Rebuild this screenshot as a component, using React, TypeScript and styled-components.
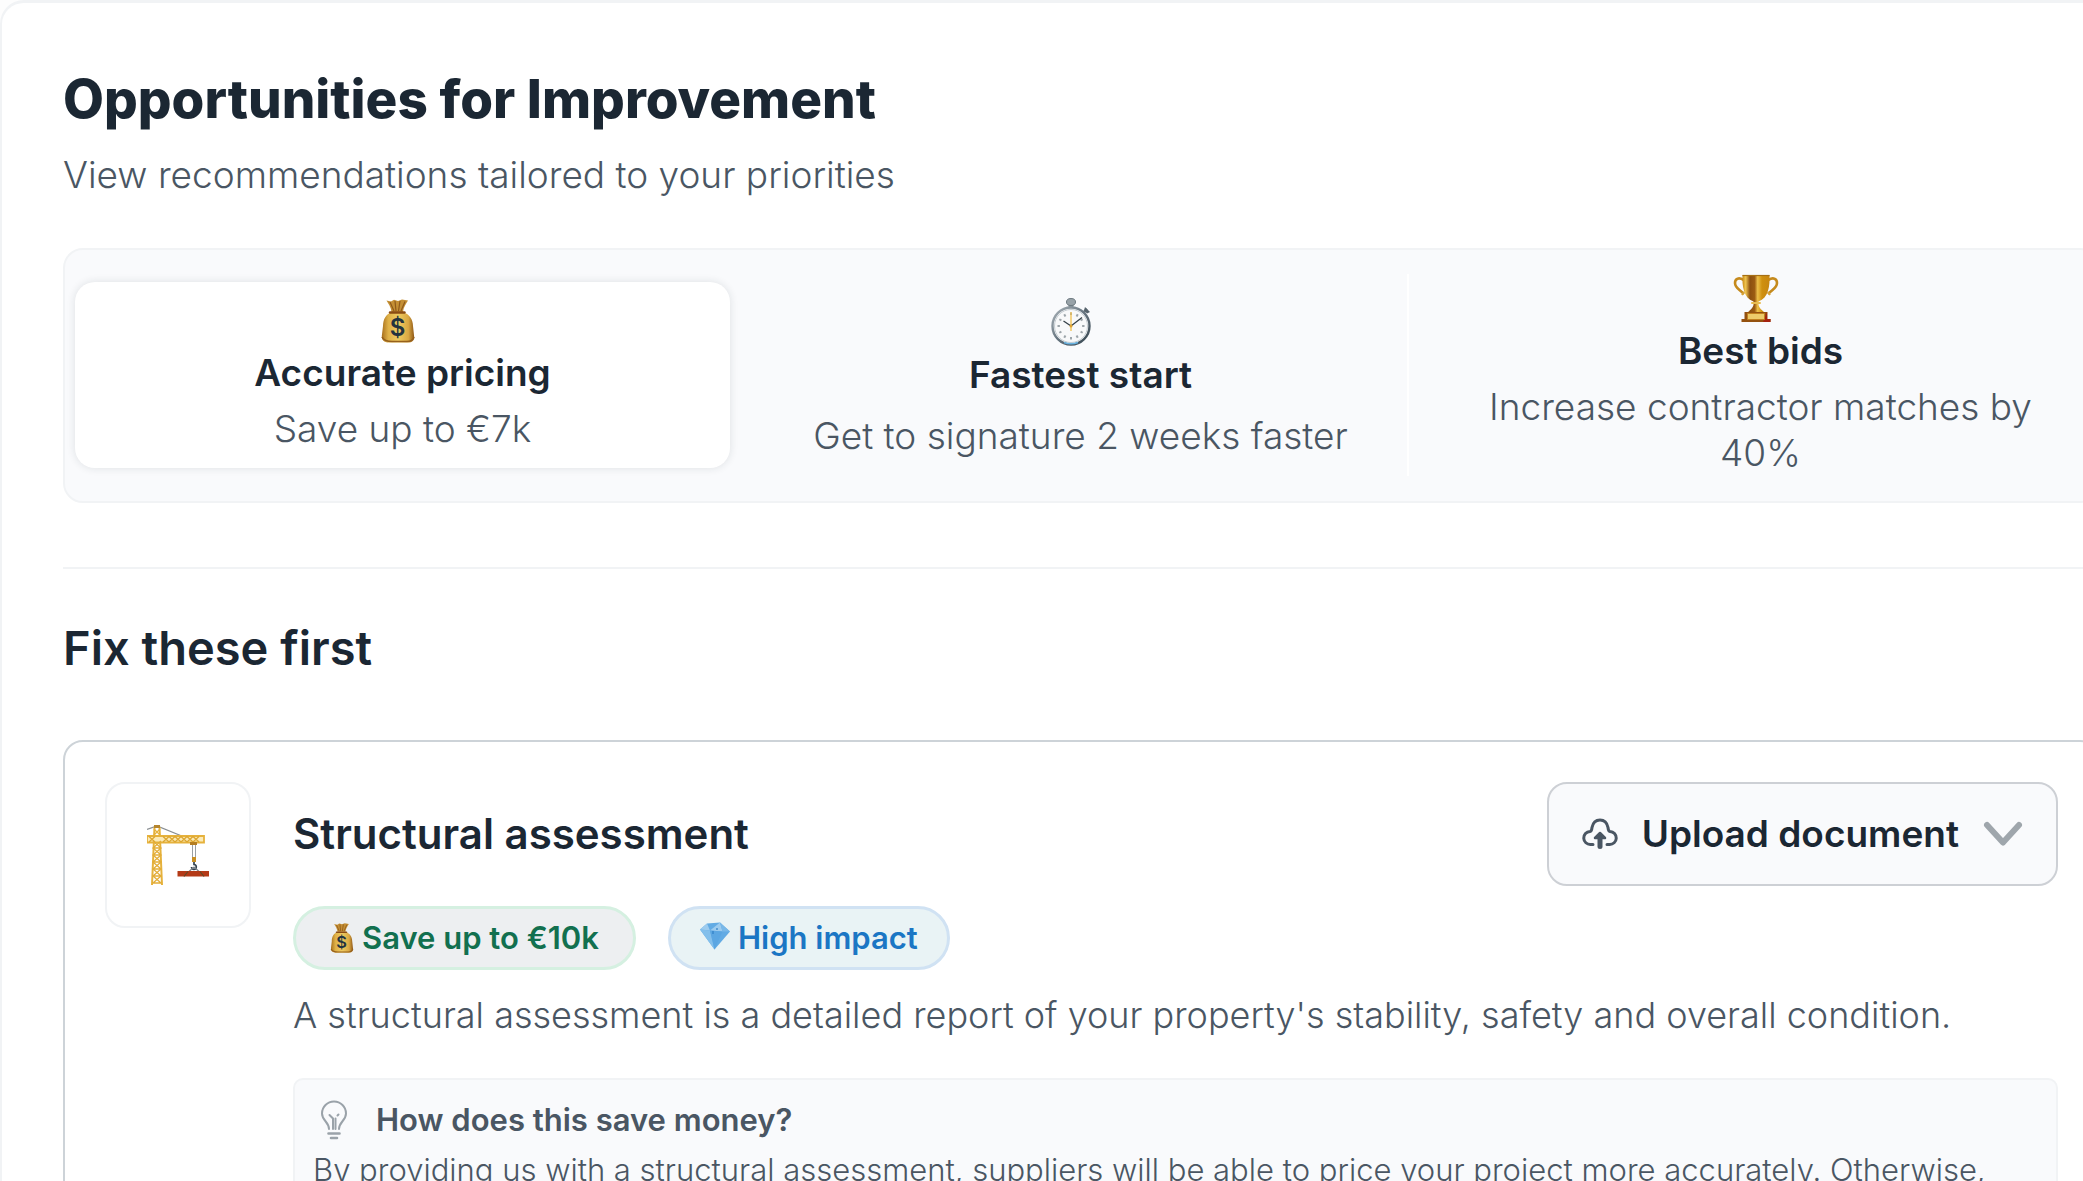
import React from "react";
import styled, { createGlobalStyle } from "styled-components";

const ink = "#1b2733";
const slate = "#4a5663";
const line = "#f1f3f5";
const wash = "#f9fafc";

const GlobalStyle = createGlobalStyle`
  *, *::before, *::after { box-sizing: border-box; }
  html, body, #root { height: 100%; }
  body {
    margin: 0;
    overflow: hidden;
    background: #fdfdfd;
    color: ${ink};
    font-family: Inter, "Liberation Sans", sans-serif;
  }
  h1, h2, h3, h4, p { margin: 0; }
  button { font: inherit; color: inherit; cursor: pointer; }
`;

const Sheet = styled.main`
  height: 100%;
  overflow: hidden;
  padding: 62px 64px 0 61px;
  background: #fff;
  border: solid ${line};
  border-width: 3px 0 0 2px;
  border-radius: 24px 0 0 0;
`;

const Content = styled.div`
  margin-right: -81px;
`;

const Title = styled.h1`
  font-size: 53px;
  line-height: 68px;
  font-weight: 800;
`;

const Subtitle = styled.p`
  margin-top: 19px;
  font-size: 37px;
  line-height: 46px;
  font-weight: 300;
  color: ${slate};
`;

const TabBar = styled.div`
  display: grid;
  grid-template-columns: repeat(3, 1fr);
  align-items: center;
  gap: 24px;
  margin-top: 50px;
  padding: 24px 10px 25px;
  background: ${wash};
  border: 2px solid ${line};
  border-radius: 20px;
`;

const Tab = styled.button<{ $active?: boolean; $ruled?: boolean }>`
  display: flex;
  flex-direction: column;
  align-items: center;
  align-self: ${(p) => (p.$ruled ? "stretch" : "center")};
  justify-content: center;
  gap: ${(p) => (p.$ruled ? 15 : 10)}px;
  padding: ${(p) => (p.$active ? "16px 24px" : p.$ruled ? "6px 48px 0" : "0 48px")};
  border: 0;
  border-right: ${(p) => (p.$ruled ? "2px solid #fff" : "0")};
  border-radius: ${(p) => (p.$active ? "20px" : "0")};
  background: ${(p) => (p.$active ? "#fff" : "none")};
  box-shadow: ${(p) => (p.$active ? "0 0 8px rgba(27, 39, 51, 0.12)" : "none")};
  text-align: center;
`;

const TabHead = styled.span`
  display: flex;
  flex-direction: column;
  align-items: center;
  gap: 6px;

  svg { margin-right: 8px; }
`;

const TabTitle = styled.span`
  font-size: 37px;
  line-height: 46px;
  font-weight: 600;
`;

const TabNote = styled.span`
  font-size: 37px;
  line-height: 46px;
  font-weight: 300;
  color: ${slate};
`;

const Rule = styled.hr`
  height: 2px;
  margin: 64px 0 0;
  border: 0;
  background: ${line};
`;

const SectionTitle = styled.h2`
  margin-top: 51px;
  font-size: 47px;
  line-height: 56px;
  font-weight: 600;
`;

const Card = styled.article`
  display: flex;
  gap: 42px;
  margin-top: 64px;
  padding: 40px;
  border: 2px solid #cdd3d8;
  border-radius: 20px;
`;

const IconTile = styled.div`
  display: flex;
  flex: none;
  align-items: center;
  justify-content: center;
  width: 146px;
  height: 146px;
  border: 2px solid ${line};
  border-radius: 20px;
`;

const CardBody = styled.div`
  flex: 1;
  min-width: 0;
`;

const CardHeader = styled.div`
  display: flex;
  align-items: center;
  justify-content: space-between;
`;

const CardTitle = styled.h3`
  font-size: 42px;
  line-height: 52px;
  font-weight: 600;
`;

const UploadButton = styled.button`
  display: flex;
  align-items: center;
  gap: 24px;
  height: 104px;
  padding: 0 33px;
  background: ${wash};
  border: 2px solid #cdd0d5;
  border-radius: 20px;
  font-size: 37px;
  line-height: 46px;
  font-weight: 600;
`;

const Badges = styled.div`
  display: flex;
  gap: 32px;
  margin-top: 20px;
`;

const Badge = styled.span<{ $tone: "green" | "blue" }>`
  display: flex;
  align-items: center;
  gap: 8px;
  height: 64px;
  padding: 0 ${(p) => (p.$tone === "green" ? 34 : 29)}px;
  border: 3px solid ${(p) => (p.$tone === "green" ? "#d5f0e1" : "#d0e2f3")};
  border-radius: 32px;
  background: ${(p) => (p.$tone === "green" ? "#edeff1" : "#e9f3f5")};
  color: ${(p) => (p.$tone === "green" ? "#12704f" : "#1b76c4")};
  font-size: 31px;
  line-height: 40px;
  font-weight: 600;
`;

const Description = styled.p`
  margin-top: 22px;
  font-size: 36px;
  line-height: 46px;
  font-weight: 300;
  white-space: nowrap;
  color: ${slate};
`;

const Note = styled.section`
  margin-top: 40px;
  padding: 20px 18px 24px;
  background: ${wash};
  border: 2px solid ${line};
  border-radius: 10px;
  color: ${slate};
`;

const NoteHeader = styled.div`
  display: flex;
  align-items: center;
  gap: 28px;
  padding-left: 7px;
`;

const NoteTitle = styled.h4`
  font-size: 31px;
  line-height: 40px;
  font-weight: 600;
`;

const NoteText = styled.p`
  margin-top: 10px;
  font-size: 31px;
  line-height: 40px;
  font-weight: 300;
  white-space: nowrap;
`;

function MoneyBag({ id, width, height }: { id: string; width: number; height: number }) {
  return (
    <svg width={width} height={height} viewBox="0 0 34 44" aria-hidden="true">
      <defs>
        <linearGradient id={id} x1="0" x2="1" y1="0" y2="0">
          <stop offset="0" stopColor="#a8701d" />
          <stop offset="0.2" stopColor="#deb047" />
          <stop offset="0.5" stopColor="#efcb61" />
          <stop offset="0.82" stopColor="#d9a843" />
          <stop offset="1" stopColor="#8f5715" />
        </linearGradient>
      </defs>
      <path d="M10.500 13C10 8 7 4 5.500 1.500L10 2.500 13 .8 17 2 21 .5 27 1.500C25 5 22.500 8 22 13Z" fill="#c48f34" />
      <path d="M9 3 13 12M14 2 15 12M19 2 17.500 12M24 2.500 20 12" stroke="#8f5a1b" strokeWidth="1.200" fill="none" />
      <path d="M11 13C5 15 2 20 2 27L.8 37C.5 41 3 43.500 8 43.500H27C31 43.500 33.500 41.500 33.200 38L32 27C32 20 28 15 22 13Z" fill={`url(#${id})`} />
      <path d="M1 38C3 42 7 42.500 11 42.500H26C30 42.500 32 41 33 38" stroke="#96601c" strokeWidth="1.600" fill="none" />
      <path d="M9 13.500H23.500" stroke="#8a4c13" strokeWidth="2.400" strokeLinecap="round" />
      <text x="16.500" y="37" textAnchor="middle" fontFamily="Inter, sans-serif" fontSize="24" fontWeight="600" fill="#23333f">$</text>
    </svg>
  );
}

function Stopwatch() {
  const marks = Array.from({ length: 12 }, (_, i) => i * 30);
  return (
    <svg width="50" height="48" viewBox="0 0 50 48" aria-hidden="true">
      <defs>
        <linearGradient id="rim" x1="0" x2="1" y1="0" y2="1">
          <stop offset="0" stopColor="#a9b2b8" />
          <stop offset="0.5" stopColor="#66747f" />
          <stop offset="1" stopColor="#35454f" />
        </linearGradient>
      </defs>
      <path d="M17.500 5h5v5h-5z" fill="#7d8a92" />
      <ellipse cx="20" cy="4" rx="4.500" ry="3.500" fill="#98a2a8" stroke="#6d7980" />
      <path d="m32 15 4-4" stroke="#6d7980" strokeWidth="2.500" />
      <path d="m34 9 5 5-3 1.500-3-3z" fill="#56636c" />
      <circle cx="20" cy="28" r="18.500" fill="#f8f9fa" stroke="url(#rim)" strokeWidth="2.400" />
      <circle cx="20" cy="28" r="16.500" fill="none" stroke="#c5cdd2" strokeWidth="1" />
      <path d="M13 44.500Q20 47 27 44.500" stroke="#68b3e2" strokeWidth="1.400" fill="none" />
      {marks.map((a) => (
        <path key={a} d="M20 14.500v2.400" stroke="#9da5aa" strokeWidth="2" transform={`rotate(${a} 20 28)`} />
      ))}
      <path d="M20 14v19" stroke="#f1c04e" strokeWidth="1.300" />
      <path d="M12.500 23 20 28 31 19.500" stroke="#333f47" strokeWidth="1.300" fill="none" />
      <circle cx="20" cy="28" r="1.500" fill="#e0a42f" />
    </svg>
  );
}

function Trophy() {
  return (
    <svg width="46" height="48" viewBox="0 0 46 48" aria-hidden="true">
      <defs>
        <linearGradient id="cup" x1="0" x2="1" y1="0" y2="0">
          <stop offset="0" stopColor="#c98a17" />
          <stop offset="0.12" stopColor="#efc44f" />
          <stop offset="0.28" stopColor="#8c4f10" />
          <stop offset="0.45" stopColor="#9c5c12" />
          <stop offset="0.56" stopColor="#edbf49" />
          <stop offset="0.72" stopColor="#cf900f" />
          <stop offset="1" stopColor="#c78610" />
        </linearGradient>
      </defs>
      <path d="M10.500 6C6 3 2 4.500 2 9C2 14 6 15 11 20M35.500 6C40 3 44 4.500 44 9C44 14 40 15 35 20" stroke="#c58a1d" strokeWidth="2.600" fill="none" />
      <path d="M11 18 9 21M35 18 37 21" stroke="#d7a336" strokeWidth="2" />
      <path d="M9.500 1H36.500C37 12 35.500 24 25.500 27.500V31C26 34 29 36 31 38H15C17 36 20 34 20.500 31V27.500C10.500 24 9 12 9.500 1Z" fill="url(#cup)" />
      <path d="M9.500 1.500H36.500" stroke="#a66f14" strokeWidth="1.200" />
      <path d="M19 29H27" stroke="#e8bd52" strokeWidth="2" strokeLinecap="round" />
      <path d="M11.500 38H34.500V45H37.500V48H8.500V45H11.500Z" fill="#94510f" />
      <path d="M34 38V45H37.500V48H30" fill="#a5220f" />
      <path d="M14.500 39.500H31.500V45.500H14.500Z" fill="#edcb6a" stroke="#c1801f" />
    </svg>
  );
}

function Gem() {
  return (
    <svg width="30" height="32" viewBox="0 0 30 32" aria-hidden="true">
      <path d="M7 1.500 20 .5 30 9.500 14.500 27.500 0 7.500Z" fill="#62abe4" />
      <path d="M7 1.500 10 8.500 0 7.500ZM20 .5 22.500 9.500 10 8.500Z" fill="#9ccbee" />
      <path d="M20 .5 30 9.500 22.500 9.500Z" fill="#79b8e8" />
      <path d="M0 7.500 10 8.500 14.500 27.500Z" fill="#83bfeb" />
      <path d="M10 8.500 22.500 9.500 14.500 27.500Z" fill="#5ba6e2" />
      <path d="M13 9v3M17 6v2" stroke="#2f7fc6" strokeWidth="1.200" />
    </svg>
  );
}

function Crane() {
  const rows = [17, 24, 31, 38, 45, 52];
  const cols = [2, 16, 22, 28, 34, 40, 46];
  return (
    <svg width="62" height="62" viewBox="0 0 62 62" aria-hidden="true">
      <path d="M0 5.500 10 2 47 17" stroke="#8a8f93" strokeWidth="1.200" fill="none" />
      <path d="M7.500 3 5 61M12.500 3 15 61" stroke="#e6b23c" strokeWidth="2" fill="none" />
      <path d="M7 1h6v3h-6z" fill="#b5852d" />
      <path d="M7 5l6 6M13 5l-6 6" stroke="#e6b23c" strokeWidth="1.200" />
      <path d="M0 12H57V18.500H0Z" fill="#fbeab8" stroke="#e6b23c" strokeWidth="1.800" />
      {cols.map((x) => (
        <path key={x} d={`M${x} 12.500l6 5.500M${x + 6} 12.500l-6 5.500`} stroke="#dda62f" strokeWidth="1.300" />
      ))}
      {rows.map((y) => (
        <path key={y} d={`M6 ${y}l8 7M14 ${y}l-8 7M5.500 ${y + 7}h9`} stroke="#e3ad38" strokeWidth="1.300" fill="none" />
      ))}
      <path d="M43 18h7v3h-7z" fill="#b57e22" />
      <path d="M45.500 21v13M48.500 21v13" stroke="#9aa0a5" strokeWidth="1" />
      <path d="M45 33h4v5h-4z" fill="#c98f22" />
      <path d="M47 38v2.500a2.400 2.400 0 1 1-2.500 2.500" stroke="#334350" strokeWidth="1.700" fill="none" />
      <path d="M47 43 37.500 51.500M47 43 56.500 51.500" stroke="#7b8288" strokeWidth="1.200" />
      <path d="M30.500 47H62V52.500H30.500Z" fill="#b43a17" />
      <path d="M41 47.500 37 52.500M53 47.500 57 52.500" stroke="#5f4a25" strokeWidth="1.200" />
    </svg>
  );
}

function CloudUpload() {
  return (
    <svg width="36" height="32" viewBox="0 0 36 32" fill="none" stroke="#4a5663" strokeWidth="3" strokeLinecap="round" strokeLinejoin="round" aria-hidden="true">
      <path d="M11 26.500H8.500A6.500 6.500 0 0 1 8 13.500C9.500 13.200 9.800 11.500 10 9.500C11 4.500 14 2 18 2S25 4.500 26 9.500C26.200 11.500 26.500 13.200 28 13.500A6.500 6.500 0 0 1 27.500 26.500H25" />
      <path d="M18 28.500V19" strokeWidth="5" />
      <path d="M18 15 23 20H13Z" fill="#4a5663" strokeWidth="2.500" />
    </svg>
  );
}

function Chevron() {
  return (
    <svg width="40" height="27" viewBox="0 0 40 27" fill="none" stroke="#9fa6ac" strokeWidth="6" strokeLinecap="round" strokeLinejoin="round" aria-hidden="true">
      <path d="M4 4 20 21.500 36 4" />
    </svg>
  );
}

function Bulb() {
  return (
    <svg width="28" height="40" viewBox="0 0 28 40" fill="none" stroke="#9aa2a9" strokeWidth="2" strokeLinecap="round" aria-hidden="true">
      <path d="M9 29C9 22 2 20.500 2 13.500A12 12 0 0 1 26 13.500C26 20.500 19 22 19 29" />
      <path d="M13 29V18.500L9.500 15M15.500 29V18.500M18.500 14.500l-1 1" />
      <path d="M8.500 33.500H19.500M11 38H17" strokeWidth="2.600" />
    </svg>
  );
}

export default function App() {
  return (
    <>
      <GlobalStyle />
      <Sheet>
        <Content>
          <Title>Opportunities for Improvement</Title>
          <Subtitle>View recommendations tailored to your priorities</Subtitle>

          <TabBar>
            <Tab type="button" $active aria-pressed="true">
              <TabHead>
                <MoneyBag id="bag-large" width={34} height={46} />
                <TabTitle>Accurate pricing</TabTitle>
              </TabHead>
              <TabNote>Save up to €7k</TabNote>
            </Tab>
            <Tab type="button" $ruled aria-pressed="false">
              <TabHead>
                <Stopwatch />
                <TabTitle>Fastest start</TabTitle>
              </TabHead>
              <TabNote>Get to signature 2 weeks faster</TabNote>
            </Tab>
            <Tab type="button" aria-pressed="false">
              <TabHead>
                <Trophy />
                <TabTitle>Best bids</TabTitle>
              </TabHead>
              <TabNote>Increase contractor matches by 40%</TabNote>
            </Tab>
          </TabBar>

          <Rule />
          <SectionTitle>Fix these first</SectionTitle>

          <Card>
            <IconTile>
              <Crane />
            </IconTile>
            <CardBody>
              <CardHeader>
                <CardTitle>Structural assessment</CardTitle>
                <UploadButton type="button">
                  <CloudUpload />
                  Upload document
                  <Chevron />
                </UploadButton>
              </CardHeader>
              <Badges>
                <Badge $tone="green">
                  <MoneyBag id="bag-small" width={24} height={30} />
                  Save up to €10k
                </Badge>
                <Badge $tone="blue">
                  <Gem />
                  High impact
                </Badge>
              </Badges>
              <Description>
                A structural assessment is a detailed report of your property's stability, safety and overall condition.
              </Description>
              <Note>
                <NoteHeader>
                  <Bulb />
                  <NoteTitle>How does this save money?</NoteTitle>
                </NoteHeader>
                <NoteText>
                  By providing us with a structural assessment, suppliers will be able to price your project more accurately. Otherwise,
                </NoteText>
              </Note>
            </CardBody>
          </Card>
        </Content>
      </Sheet>
    </>
  );
}
